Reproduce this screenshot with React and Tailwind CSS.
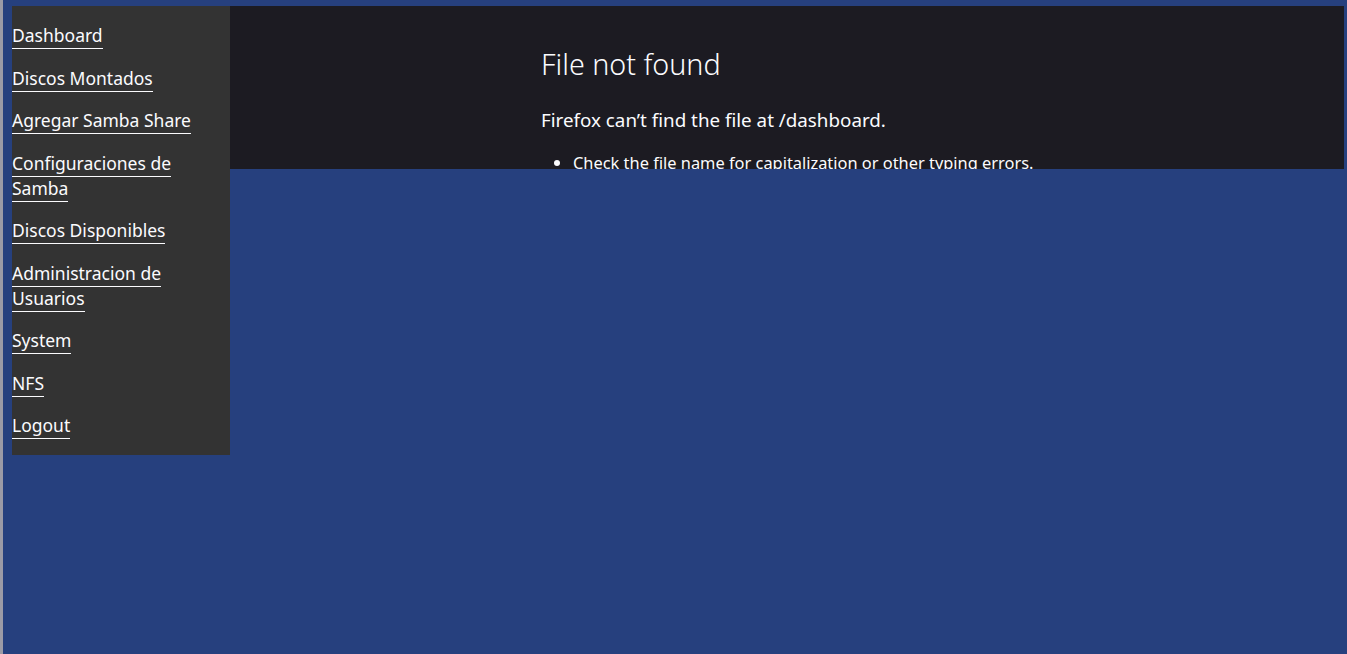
import React from 'react';

const links = [
  'Dashboard',
  'Discos Montados',
  'Agregar Samba Share',
  'Configuraciones de Samba',
  'Discos Disponibles',
  'Administracion de Usuarios',
  'System',
  'NFS',
  'Logout',
];

export default function App() {
  return (
    <div className="flex h-[654px] w-full bg-[#26407e] font-['Noto_Sans',sans-serif]">
      <div className="w-[3px] shrink-0 bg-[#9b9ba6]" />
      <div className="flex flex-1 items-start pt-[6px] pl-[9px] pr-[3px]">
        <nav className="w-[218px] shrink-0 bg-[#333333] pt-[17px] pb-[17px]">
          <ul className="flex flex-col gap-[17.5px]">
            {links.map((l) => (
              <li key={l} className="text-[17.5px] leading-[25px] text-[#fbfbfe]">
                <a href="#" className="border-b border-[#fbfbfe] pb-px">
                  {l}
                </a>
              </li>
            ))}
          </ul>
        </nav>
        <main className="h-[163px] flex-1 overflow-hidden bg-[#1c1b22] pt-[40px] pl-[311px] text-[#fbfbfe]">
          <h1 className="text-[28.7px] font-light leading-[36px]">File not found</h1>
          <p className="mt-[23.5px] text-[18.8px] leading-[28px]">
            Firefox can’t find the file at /dashboard.
          </p>
          <ul className="mt-[17px] list-disc pl-[32px] text-[16.4px] leading-[24px]">
            <li>Check the file name for capitalization or other typing errors.</li>
          </ul>
        </main>
      </div>
    </div>
  );
}
